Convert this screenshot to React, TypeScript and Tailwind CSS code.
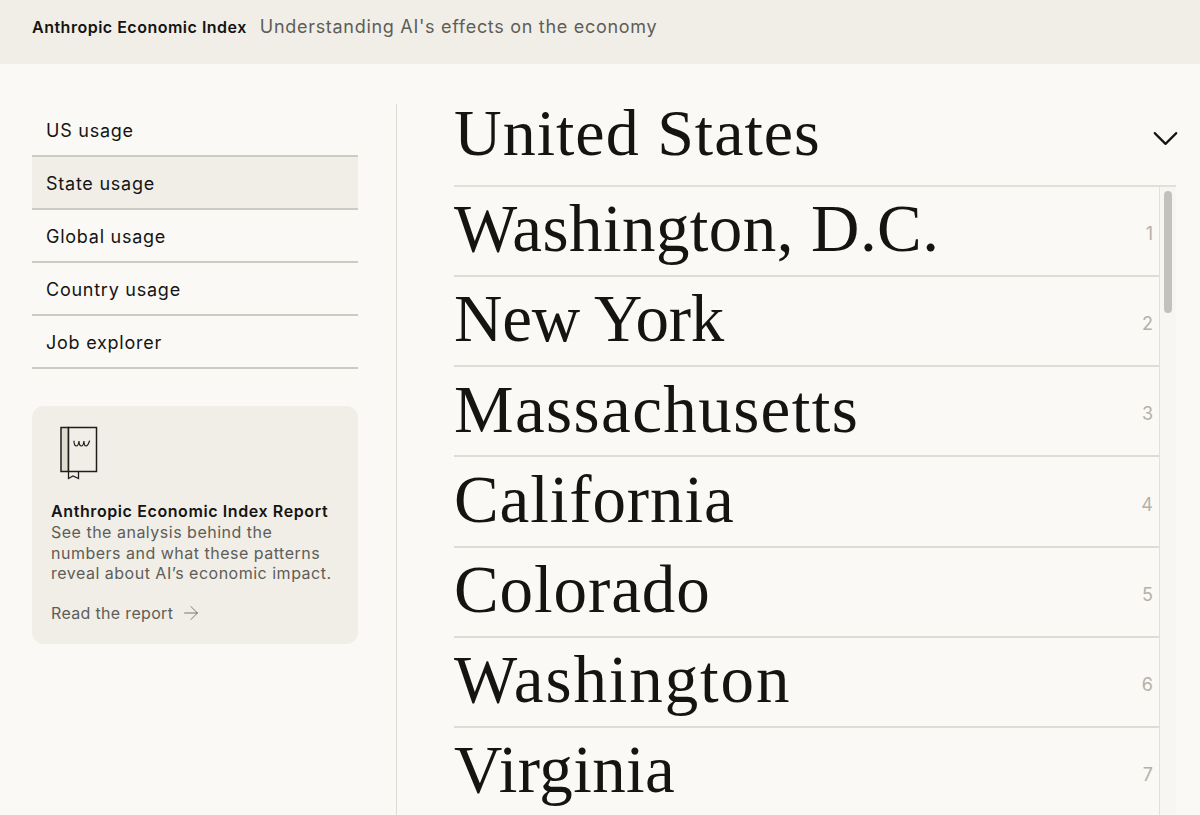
import { ChevronDown, ArrowRight } from 'lucide-react';

const navItems = ['US usage', 'State usage', 'Global usage', 'Country usage', 'Job explorer'];

const states = [
    { name: 'Washington, D.C.', tracking: 'tracking-[0.43px]' },
    { name: 'New York', tracking: 'tracking-[-0.2px]' },
    { name: 'Massachusetts', tracking: 'tracking-[1.4px]' },
    { name: 'California', tracking: 'tracking-[0.9px]' },
    { name: 'Colorado', tracking: 'tracking-[0.92px]' },
    { name: 'Washington', tracking: 'tracking-[1.9px]' },
    { name: 'Virginia', tracking: 'tracking-[0.4px]' },
];

function BookIcon() {
    return (
        <svg width="40" height="56" viewBox="0 0 40 56" fill="none" stroke="#1f1e1b" strokeWidth="1.5">
            <rect x="1" y="1.500" width="7.500" height="44" fill="#e0dccf" />
            <rect x="8.500" y="1.500" width="28" height="44" fill="#f0eee7" />
            <path d="M8.500 45.500v7l4.500-2.500 5.500 2.500v-7" strokeWidth="1.300" />
            <path d="M14 15c0 3 1 5 2.500 5s2-2 2.500-5c0 3 1 5 2.500 5s2-2 2.500-5c0 3 .5 5 2 5s2.500-2 3.500-5" strokeWidth="1.200" strokeLinecap="round" />
        </svg>
    );
}

export default function App() {
    return (
        <div className="h-[815px] overflow-hidden bg-[#faf9f5] font-['Inter',sans-serif] text-[#141413]">
            <header className="flex h-[64px] items-center gap-[13px] bg-[#f0eee6] px-8 pb-[11px]">
                <span className="text-[16px] font-semibold tracking-[0.5px]">Anthropic Economic Index</span>
                <span className="text-[18px] tracking-[0.7px] text-[#5e5d59]">Understanding AI's effects on the economy</span>
            </header>

            <div className="flex pt-10">
                <aside className="w-[397px] shrink-0 border-r border-[#dedcd4] pl-8 pr-[38px]">
                    <nav>
                        {navItems.map((item) => (
                            <div
                                key={item}
                                className={`flex h-[53px] items-center border-b-2 border-[#cdcbc4] px-[14px] pt-[1px] text-[18px] tracking-[0.75px] ${item === 'State usage' ? 'bg-[#f0eee6]' : ''}`}
                            >
                                {item}
                            </div>
                        ))}
                    </nav>

                    <div className="mt-[37px] h-[238px] rounded-xl bg-[#f0eee6] px-[19px] pt-[20px]">
                        <div className="ml-[9px]">
                            <BookIcon />
                        </div>
                        <div className="mt-[19px] text-[16px] font-semibold leading-[21px] tracking-[0.6px]">Anthropic Economic Index Report</div>
                        <p className="text-[16px] leading-[20.500px] tracking-[0.5px] text-[#5e5d59]">
                            See the analysis behind the
                            <br />
                            numbers and what these patterns
                            <br />
                            reveal about AI’s economic impact.
                        </p>
                        <div className="mt-[17px] flex items-center gap-[7px] text-[16px] tracking-[0.33px] text-[#5e5d59]">
                            Read the report
                            <ArrowRight className="h-[22px] w-[22px]" strokeWidth={0.900} />
                        </div>
                    </div>
                </aside>

                <main className="ml-[57px] w-[722px] font-['Liberation_Serif',serif]">
                    <div className="flex h-[83px] items-center justify-between border-b-2 border-[#e2e0d9] pb-[24px]">
                        <h1 className="text-[66px] font-normal leading-none tracking-[1px]">United States</h1>
                        <ChevronDown className="mr-[-11px] mt-[11px] h-[43px] w-[43px]" strokeWidth={1.200} />
                    </div>

                    <div className="flex">
                        <ul className="w-[706px] border-r border-[#e2e0d9]">
                            {states.map(({ name, tracking }, i) => (
                                <li key={name} className="flex h-[90.170px] items-center justify-between border-b-2 border-[#dedcd4] pr-[6px]">
                                    <span className={`mt-[-5px] text-[67px] ${tracking}`}>{name}</span>
                                    <span className="mt-[5px] font-['Inter',sans-serif] text-[18px] text-[#b3b1aa]">{i + 1}</span>
                                </li>
                            ))}
                        </ul>
                        <div className="flex-1 bg-[#f7f6f2] px-[4px] pt-[4px]">
                            <div className="h-[122px] rounded-full bg-[#c1c1c0]" />
                        </div>
                    </div>
                </main>
            </div>
        </div>
    );
}
